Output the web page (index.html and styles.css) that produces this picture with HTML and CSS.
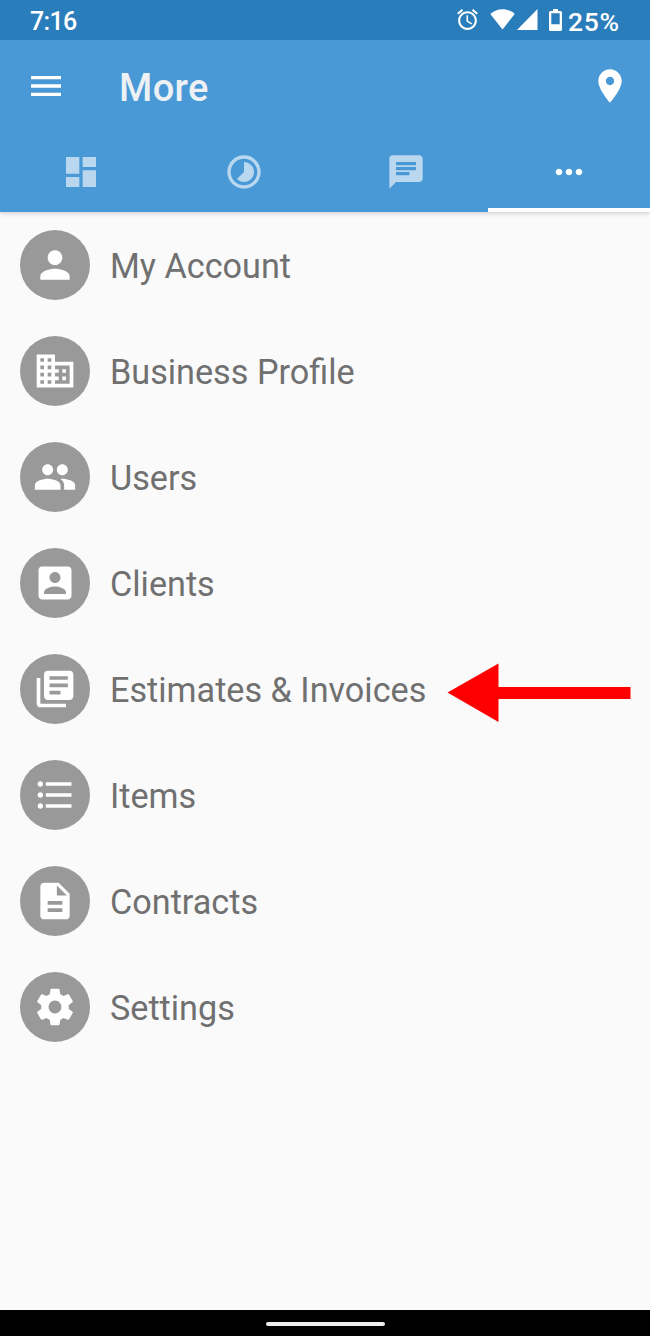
FILE: index.html
```html
<!DOCTYPE html>
<html lang="en">
<head>
<meta charset="utf-8">
<title>More</title>
<link rel="stylesheet" href="styles.css">
</head>
<body>
<div class="screen">
  <div class="status">
    <span class="clock">7:16</span>
    <div class="status-right">
      <svg class="alarm" viewBox="0 0 24 24"><path d="M22 5.720l-4.600-3.860-1.290 1.530 4.600 3.860L22 5.720zM7.880 3.390L6.600 1.860 2 5.710l1.290 1.530 4.590-3.850zM12.500 8H11v6l4.750 2.850.75-1.230-4-2.370V8zM12 4c-4.970 0-9 4.030-9 9s4.020 9 9 9c4.970 0 9-4.030 9-9s-4.030-9-9-9zm0 16c-3.870 0-7-3.130-7-7s3.130-7 7-7 7 3.130 7 7-3.130 7-7 7z"/></svg>
      <svg class="wifi" viewBox="0 0 25 21"><path d="M0.300 5C7-1.300 18-1.300 24.700 5L12.500 20.500z"/></svg>
      <svg class="signal" viewBox="0 0 21 21"><path d="M20.500 0v21H0z"/></svg>
      <svg class="battery" viewBox="0 0 13 22"><path fill-rule="evenodd" d="M4 0h5v2h2.500q1.500 0 1.500 1.500v17q0 1.500-1.500 1.500h-10q-1.500 0-1.500-1.500v-17q0-1.500 1.500-1.500h2.500zM2.300 4.300v11h8.400v-11z"/></svg>
      <span class="percent">25%</span>
    </div>
  </div>
  <header class="header">
    <div class="bar">
      <svg class="icon40" viewBox="0 0 24 24"><path d="M3 18h18v-2H3v2zm0-5h18v-2H3v2zm0-7v2h18V6H3z"/></svg>
      <h1 class="title">More</h1>
      <svg class="icon40" viewBox="0 0 24 24"><path d="M12 2C8.130 2 5 5.130 5 9c0 5.250 7 13 7 13s7-7.750 7-13c0-3.870-3.130-7-7-7zm0 9.500c-1.380 0-2.500-1.120-2.500-2.500s1.120-2.500 2.500-2.500 2.500 1.120 2.500 2.500-1.120 2.500-2.500 2.500z"/></svg>
    </div>
    <nav class="tabs">
      <div class="tab"><svg class="icon40" viewBox="0 0 24 24"><path d="M3 13h8V3H3v10zm0 8h8v-6H3v6zm10 0h8V11h-8v10zm0-18v6h8V3h-8z"/></svg></div>
      <div class="tab"><svg class="icon40" viewBox="0 0 24 24"><path d="M16.240 7.760C15.070 6.590 13.540 6 12 6v6l-4.240 4.240c2.340 2.340 6.140 2.340 8.490 0 2.340-2.340 2.340-6.140-.01-8.480zM12 2C6.480 2 2 6.480 2 12s4.480 10 10 10 10-4.480 10-10S17.520 2 12 2zm0 18c-4.420 0-8-3.580-8-8s3.580-8 8-8 8 3.580 8 8-3.580 8-8 8z"/></svg></div>
      <div class="tab"><svg class="icon40" viewBox="0 0 24 24"><path d="M20 2H4c-1.100 0-1.990.9-1.990 2L2 22l4-4h14c1.100 0 2-.9 2-2V4c0-1.100-.9-2-2-2zM6 9h12v2H6V9zm8 5H6v-2h8v2zm4-6H6V6h12v2z"/></svg></div>
      <div class="tab tab-active"><svg class="icon40" viewBox="0 0 24 24"><path d="M6 10c-1.100 0-2 .9-2 2s.9 2 2 2 2-.9 2-2-.9-2-2-2zm12 0c-1.100 0-2 .9-2 2s.9 2 2 2 2-.9 2-2-.9-2-2-2zm-6 0c-1.100 0-2 .9-2 2s.9 2 2 2 2-.9 2-2-.9-2-2-2z"/></svg></div>
    </nav>
  </header>
  <main class="list">
    <div class="row"><span class="disc"><svg viewBox="0 0 24 24"><path d="M12 12c2.210 0 4-1.790 4-4s-1.790-4-4-4-4 1.790-4 4 1.790 4 4 4zm0 2c-2.670 0-8 1.340-8 4v2h16v-2c0-2.660-5.330-4-8-4z"/></svg></span><span class="label">My Account</span></div>
    <div class="row"><span class="disc"><svg viewBox="0 0 24 24"><path d="M12 7V3H2v18h20V7H12zM6 19H4v-2h2v2zm0-4H4v-2h2v2zm0-4H4V9h2v2zm0-4H4V5h2v2zm4 12H8v-2h2v2zm0-4H8v-2h2v2zm0-4H8V9h2v2zm0-4H8V5h2v2zm10 12h-8v-2h2v-2h-2v-2h2v-2h-2V9h8v10zm-2-8h-2v2h2v-2zm0 4h-2v2h2v-2z"/></svg></span><span class="label">Business Profile</span></div>
    <div class="row"><span class="disc"><svg viewBox="0 0 24 24"><path d="M16 11c1.660 0 2.990-1.340 2.990-3S17.660 5 16 5c-1.660 0-3 1.340-3 3s1.340 3 3 3zm-8 0c1.660 0 2.990-1.340 2.990-3S9.660 5 8 5C6.340 5 5 6.340 5 8s1.340 3 3 3zm0 2c-2.330 0-7 1.170-7 3.500V19h14v-2.500c0-2.330-4.670-3.500-7-3.500zm8 0c-.29 0-.62.020-.97.050 1.160.84 1.970 1.970 1.970 3.450V19h6v-2.500c0-2.330-4.670-3.500-7-3.500z"/></svg></span><span class="label">Users</span></div>
    <div class="row"><span class="disc"><svg viewBox="0 0 24 24"><path d="M3 5v14c0 1.100.89 2 2 2h14c1.100 0 2-.9 2-2V5c0-1.100-.9-2-2-2H5c-1.110 0-2 .9-2 2zm12 4c0 1.660-1.340 3-3 3s-3-1.340-3-3 1.340-3 3-3 3 1.340 3 3zm-9 8c0-2 4-3.100 6-3.100s6 1.100 6 3.100v1H6v-1z"/></svg></span><span class="label">Clients</span></div>
    <div class="row"><span class="disc"><svg viewBox="0 0 24 24"><path d="M4 6H2v14c0 1.100.9 2 2 2h14v-2H4V6zm16-4H8c-1.100 0-2 .9-2 2v12c0 1.100.9 2 2 2h12c1.100 0 2-.9 2-2V4c0-1.100-.9-2-2-2zm-1 9H9V9h10v2zm-4 4H9v-2h6v2zm4-8H9V5h10v2z"/></svg></span><span class="label">Estimates &amp; Invoices</span>
      <svg class="arrow" viewBox="0 0 184 60"><path d="M0.500 29.500L51.500 0.500V24H183.500V36H51.500V59z"/></svg></div>
    <div class="row"><span class="disc"><svg viewBox="0 0 24 24"><path d="M4 10.500c-.83 0-1.500.67-1.500 1.500s.67 1.500 1.500 1.500 1.500-.67 1.500-1.500-.67-1.500-1.500-1.500zm0-6c-.83 0-1.500.67-1.500 1.500S3.170 7.500 4 7.500 5.500 6.830 5.500 6 4.830 4.500 4 4.500zm0 12c-.83 0-1.500.68-1.500 1.500s.68 1.500 1.500 1.500 1.500-.68 1.500-1.500-.67-1.500-1.500-1.500zM7 19h14v-2H7v2zm0-6h14v-2H7v2zm0-8v2h14V5H7z"/></svg></span><span class="label">Items</span></div>
    <div class="row"><span class="disc"><svg viewBox="0 0 24 24"><path d="M14 2H6c-1.100 0-1.990.9-1.990 2L4 20c0 1.100.89 2 1.990 2H18c1.100 0 2-.9 2-2V8l-6-6zm2 16H8v-2h8v2zm0-4H8v-2h8v2zm-3-5V3.500L18.500 9H13z"/></svg></span><span class="label">Contracts</span></div>
    <div class="row"><span class="disc"><svg viewBox="0 0 24 24"><path d="M19.430 12.980c.04-.32.07-.64.07-.98s-.03-.66-.07-.98l2.110-1.650c.19-.15.24-.42.12-.64l-2-3.460c-.12-.22-.39-.3-.61-.22l-2.490 1c-.52-.4-1.080-.73-1.690-.98l-.38-2.650C14.460 2.180 14.250 2 14 2h-4c-.25 0-.46.18-.49.42l-.38 2.650c-.61.25-1.170.59-1.690.98l-2.490-1c-.23-.09-.49 0-.61.22l-2 3.460c-.13.22-.07.49.12.64l2.110 1.650c-.04.32-.07.65-.07.98s.03.66.07.98l-2.110 1.650c-.19.15-.24.42-.12.64l2 3.460c.12.22.39.3.61.22l2.490-1c.52.4 1.080.73 1.690.98l.38 2.650c.03.24.24.42.49.42h4c.25 0 .46-.18.49-.42l.38-2.650c.61-.25 1.170-.59 1.690-.98l2.490 1c.23.09.49 0 .61-.22l2-3.460c.12-.22.07-.49-.12-.64l-2.110-1.650zM12 15.500c-1.930 0-3.500-1.570-3.500-3.500s1.570-3.500 3.500-3.500 3.500 1.570 3.500 3.500-1.570 3.500-3.500 3.500z"/></svg></span><span class="label">Settings</span></div>
  </main>
  <footer class="navbar"><div class="pill"></div></footer>
</div>
</body>
</html>
```
FILE: styles.css
```css
* { box-sizing: border-box; }
body { margin: 0; font-family: Roboto, "Liberation Sans", sans-serif; }
svg { display: block; fill: #fff; flex: none; }
.screen { width: 650px; height: 1336px; display: flex; flex-direction: column; background: #fafafa; }
.status { height: 39.5px; flex: none; background: #2a7dbb; color: #fff; display: flex; justify-content: space-between; padding: 0 30px 0 30px; font-size: 25px; font-weight: 500; line-height: 43px; }
.clock { letter-spacing: -.7px; }
.status-right { display: flex; padding-top: 9px; }
.alarm { width: 25px; height: 25px; margin: -2px 10px 0 0; }
.wifi { width: 25px; height: 21px; margin-right: 2px; }
.signal { width: 21px; height: 21px; margin-right: 11px; }
.battery { width: 13px; height: 22px; margin-right: 6px; }
.percent { width: 52px; margin: -9px 0 0; font-size: 26.5px; letter-spacing: .7px; white-space: nowrap; }
.header { height: 172px; flex: none; background: #4999d6; box-shadow: 0 1px 5px rgba(0, 0, 0, .2); clip-path: inset(0 0 -10px); }
.bar { height: 93px; display: flex; align-items: center; padding: 0 20px 0 26px; }
.icon40 { width: 40px; height: 40px; }
.title { flex: 1; margin: 0; padding: 3px 0 0 53px; font-size: 38px; font-weight: 500; line-height: 44px; letter-spacing: .4px; color: #eef1f4; }
.tabs { height: 79px; display: grid; grid-template-columns: repeat(4, 1fr); }
.tab { display: flex; justify-content: center; padding-top: 19px; border-bottom: 4px solid transparent; }
.tab svg { fill: #b9d7ef; }
.tab-active { border-bottom-color: #fff; }
.tab-active svg { fill: #fff; }
.list { flex: 1; padding: 18.200px 19px 0 20px; display: flex; flex-direction: column; gap: 36px; }
.row { height: 70px; display: flex; align-items: center; }
.disc { width: 70px; height: 70px; border-radius: 50%; background: #999; display: flex; align-items: center; justify-content: center; }
.disc svg { width: 44px; height: 44px; }
.label { padding: 2px 0 0 20px; font-size: 34.2px; line-height: 40px; color: #707070; white-space: nowrap; }
.arrow { width: 184px; height: 60px; margin: 8px 0 0 auto; fill: #f00; }
.navbar { height: 26.500px; flex: none; background: #000; display: flex; justify-content: center; padding-top: 12.500px; }
.pill { width: 119px; height: 4px; border-radius: 2px; background: #eee; }
```
